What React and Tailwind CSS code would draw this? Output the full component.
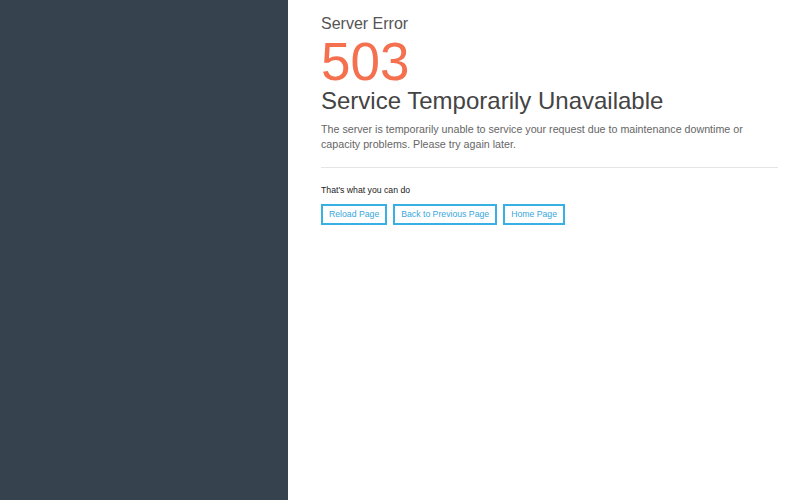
import React from 'react';

const App = () => {
  return (
    <div className="flex w-full h-[500px] font-['Liberation_Sans',Arial,sans-serif]">
      <aside className="w-[288px] shrink-0 bg-[#36424d]"></aside>

      <main className="flex-1 bg-white pl-[33px] pr-[22px] pt-[14px]">
        <h2 className="text-[16px] leading-[20px] text-[#555]">Server Error</h2>
        <h1 className="mt-[4px] text-[53px] leading-[48px] text-[#f4704f]">503</h1>
        <h3 className="mt-[3px] text-[24px] leading-[24px] text-[#444]">Service Temporarily Unavailable</h3>
        <p className="mt-[9px] text-[10.7px] leading-[15px] text-[#666]">
          The server is temporarily unable to service your request due to maintenance downtime or capacity problems. Please try again later.
        </p>

        <hr className="mt-[15px] border-t border-[#e5e5e5]" />

        <p className="mt-[16px] text-[8.7px] leading-[12px] text-[#222]">That's what you can do</p>

        <div className="mt-[8px] flex gap-[6px]">
          {['Reload Page', 'Back to Previous Page', 'Home Page'].map((label) => (
            <button
              key={label}
              className="h-[21px] px-[6px] border-2 border-[#38b0e3] text-[8.7px] text-[#38a6dc] bg-white"
            >
              {label}
            </button>
          ))}
        </div>
      </main>
    </div>
  );
};

export default App;
